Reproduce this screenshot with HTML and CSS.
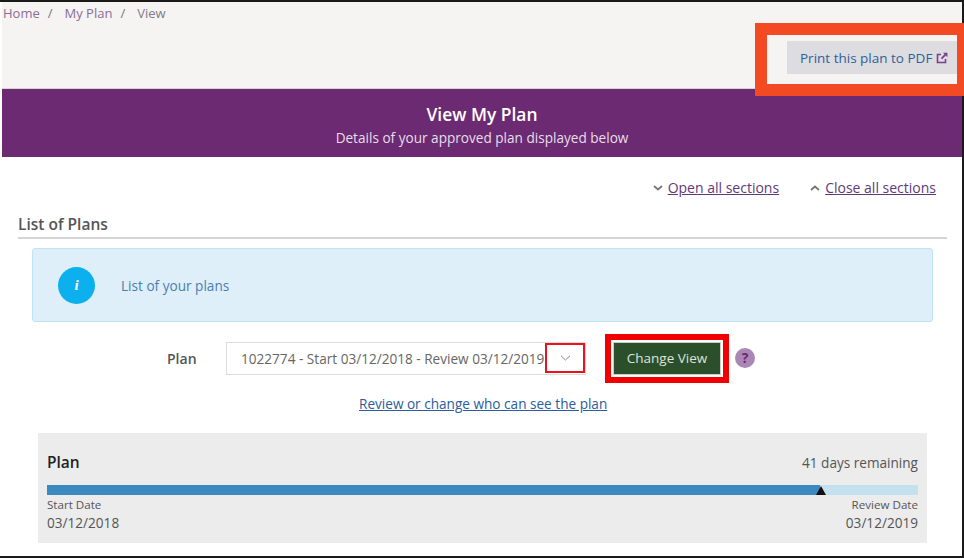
FILE: index.html
```html
<!DOCTYPE html>
<html lang="en">

<head>
    <meta charset="UTF-8">
    <meta name="viewport" content="width=device-width, initial-scale=1.0">
    <title>View My Plan</title>
    <link rel="stylesheet" href="styles.css">
</head>

<body>
    <div class="frame">
        <div class="topstrip">
            <div class="crumbs">
                <a href="#">Home</a><span class="sep">/</span><a href="#">My Plan</a><span class="sep">/</span><span>View</span>
            </div>
            <div class="print-row">
                <a href="#" class="print-btn">Print this plan to PDF
                    <svg class="ext-icon" width="12" height="12" viewBox="0 0 12 12">
                        <path d="M5 2.5H1.5v8h8V7" fill="none" stroke="#7d3f8c" stroke-width="1.6"/>
                        <path d="M7 .8h4.4v4.4L9.8 3.6 6.2 7.2 4.9 5.9l3.6-3.6z" fill="#7d3f8c"/>
                    </svg>
                </a>
            </div>
        </div>

        <div class="banner">
            <h1>View My Plan</h1>
            <p>Details of your approved plan displayed below</p>
        </div>

        <div class="content">
            <div class="toggles">
                <span class="toggle">
                    <svg width="10" height="6" viewBox="0 0 10 6"><path d="M1 1l4 3.5L9 1" fill="none" stroke="#777" stroke-width="1.8"/></svg>
                    <a href="#">Open all sections</a>
                </span>
                <span class="toggle">
                    <svg width="10" height="6" viewBox="0 0 10 6"><path d="M1 5l4-3.5L9 5" fill="none" stroke="#777" stroke-width="1.8"/></svg>
                    <a href="#">Close all sections</a>
                </span>
            </div>

            <h2 class="section-title">List of Plans</h2>

            <div class="info-box">
                <div class="info-icon">i</div>
                <span>List of your plans</span>
            </div>

            <div class="plan-row">
                <label class="plan-label">Plan</label>
                <div class="plan-select">
                    <span class="plan-value">1022774 - Start 03/12/2018 - Review 03/12/2019</span>
                    <span class="select-arrow">
                        <svg width="11" height="6" viewBox="0 0 11 6"><path d="M1 .8l4.5 4.2L10 .8" fill="none" stroke="#888" stroke-width="1"/></svg>
                    </span>
                </div>
                <span class="change-outline"><button class="change-btn">Change View</button></span>
                <span class="help">?</span>
            </div>

            <div class="review-link"><a href="#">Review or change who can see the plan</a></div>

            <div class="plan-card">
                <div class="card-head">
                    <strong>Plan</strong>
                    <span>41 days remaining</span>
                </div>
                <div class="bar">
                    <div class="bar-fill"></div>
                    <div class="bar-marker"></div>
                </div>
                <div class="dates">
                    <div>
                        <div class="date-label">Start Date</div>
                        <div class="date-value">03/12/2018</div>
                    </div>
                    <div class="date-right">
                        <div class="date-label">Review Date</div>
                        <div class="date-value">03/12/2019</div>
                    </div>
                </div>
            </div>
        </div>

        <!-- annotation drawn over the screenshot -->
        <div class="callout"></div>
    </div>
</body>

</html>
```

FILE: styles.css
```css
* {
    box-sizing: border-box;
}

html, body {
    margin: 0;
    height: 100%;
    overflow: hidden;
    background: #fff;
}

.frame {
    position: relative;
    width: 964px;
    height: 558px;
    border-top: 2px solid #1a1a1a;
    border-right: 2px solid #1a1a1a;
    border-bottom: 2px solid #1a1a1a;
    padding-left: 2px;
    font-family: "Open Sans", sans-serif;
    font-size: 13.6px;
    color: #555;
}

.topstrip {
    height: 87px;
    background-color: #f6f3f3;
    border-bottom: 1px solid #d5d3d6;
}

.crumbs {
    padding: 2px 0 0 1px;
    height: 39px;
    font-size: 13px;
    line-height: 18px;
    color: #857a8c;
}

.crumbs a {
    color: #8a6d96;
    text-decoration: none;
}

.sep {
    margin: 0 12px 0 8px;
    color: #777;
}

.print-row {
    display: flex;
    justify-content: flex-end;
    padding-right: 4px;
}

.print-btn {
    display: flex;
    align-items: center;
    gap: 4px;
    width: 171px;
    height: 33px;
    padding-left: 13px;
    background-color: #dcdce1;
    color: #2f5f9a;
    text-decoration: none;
    font-size: 13.5px;
    white-space: nowrap;
}

.banner {
    height: 68px;
    padding-top: 13px;
    background-color: #6b2a72;
    text-align: center;
    color: #fff;
}

.banner h1 {
    margin: 0;
    font-size: 17.4px;
    line-height: 24px;
    font-weight: 600;
}

.banner p {
    margin: 2px 0 0;
    font-size: 13.6px;
    line-height: 20px;
    color: #e8deea;
}

.content {
    padding: 0 26px 0 16px;
}

.toggles {
    display: flex;
    justify-content: flex-end;
    gap: 31px;
    height: 59px;
    padding-top: 21px;
    line-height: 20px;
}

.toggle {
    display: flex;
    align-items: center;
    height: 20px;
    gap: 5px;
}

.toggle a {
    color: #5f3a78;
    font-size: 14px;
}

.section-title {
    margin: 0 -11px 9px 0;
    height: 23px;
    font-size: 15.5px;
    line-height: 17px;
    font-weight: 600;
    color: #555;
    border-bottom: 2px solid #d4d4d4;
}

.info-box {
    display: flex;
    align-items: center;
    gap: 26px;
    height: 74px;
    margin-left: 14px;
    margin-right: 3px;
    padding-left: 25px;
    background-color: #deeffa;
    border: 1px solid #bfe3f2;
    border-radius: 3px;
    color: #4a7fae;
}

.info-icon {
    width: 37px;
    height: 37px;
    border-radius: 50%;
    background-color: #0cb0ee;
    color: #fff;
    font-family: "Liberation Serif", serif;
    font-style: italic;
    font-weight: bold;
    font-size: 15px;
    line-height: 37px;
    text-align: center;
}

.plan-row {
    display: flex;
    align-items: center;
    height: 52px;
    margin-top: 10px;
    padding-left: 149px;
}

.plan-label {
    width: 59px;
    font-size: 14px;
    font-weight: 600;
    color: #555;
}

.plan-select {
    display: flex;
    align-items: flex-start;
    width: 360px;
    height: 33px;
    background: #fff;
    border: 1px solid #dcdcdc;
}

.plan-value {
    width: 319px;
    padding-left: 14px;
    line-height: 31px;
    white-space: nowrap;
    color: #666;
}

.select-arrow {
    display: flex;
    align-items: center;
    justify-content: center;
    width: 40px;
    height: 30px;
    border: 2px solid #e8131e;
}

.change-outline {
    display: block;
    margin-left: 19px;
    padding: 2px;
    border: 6px solid #f00000;
    background: #fff;
}

.change-btn {
    display: block;
    width: 108px;
    height: 33px;
    padding: 0;
    border: 1px solid #c9d0c6;
    background-color: #2c4f2b;
    color: #dfe3dc;
    font-family: "Open Sans", sans-serif;
    font-size: 13.5px;
}

.help {
    width: 20px;
    height: 20px;
    margin-left: 6px;
    border-radius: 50%;
    background-color: #ab87b5;
    color: #6b2a72;
    font-weight: 700;
    font-size: 14px;
    line-height: 20px;
    text-align: center;
}

.review-link {
    margin-top: 10px;
    height: 39px;
    padding-left: 341px;
    line-height: 20px;
}

.review-link a {
    color: #2b5c9e;
}

.plan-card {
    height: 110px;
    margin-left: 20px;
    margin-right: 9px;
    padding: 0 9px;
    background-color: #ececec;
}

.card-head {
    display: flex;
    justify-content: space-between;
    align-items: center;
    height: 52px;
    padding-top: 6px;
}

.card-head strong {
    font-size: 15.5px;
    font-weight: 600;
    color: #222;
}

.bar {
    position: relative;
    height: 10px;
    background-color: #c5e0ee;
}

.bar-fill {
    width: 773px;
    height: 100%;
    background-color: #3a8abf;
}

.bar-marker {
    position: absolute;
    left: 769px;
    top: 1px;
    width: 0;
    height: 0;
    border-left: 5px solid transparent;
    border-right: 5px solid transparent;
    border-bottom: 9px solid #111;
}

.dates {
    display: flex;
    justify-content: space-between;
    padding-top: 2px;
}

.date-right {
    text-align: right;
}

.date-label {
    font-size: 11.6px;
    line-height: 15px;
}

.date-value {
    font-size: 13.6px;
    line-height: 22px;
}

.callout {
    position: absolute;
    left: 755px;
    top: 21px;
    width: 209px;
    height: 73px;
    border: 12px solid #f44a23;
    border-right-width: 7px;
}
```
